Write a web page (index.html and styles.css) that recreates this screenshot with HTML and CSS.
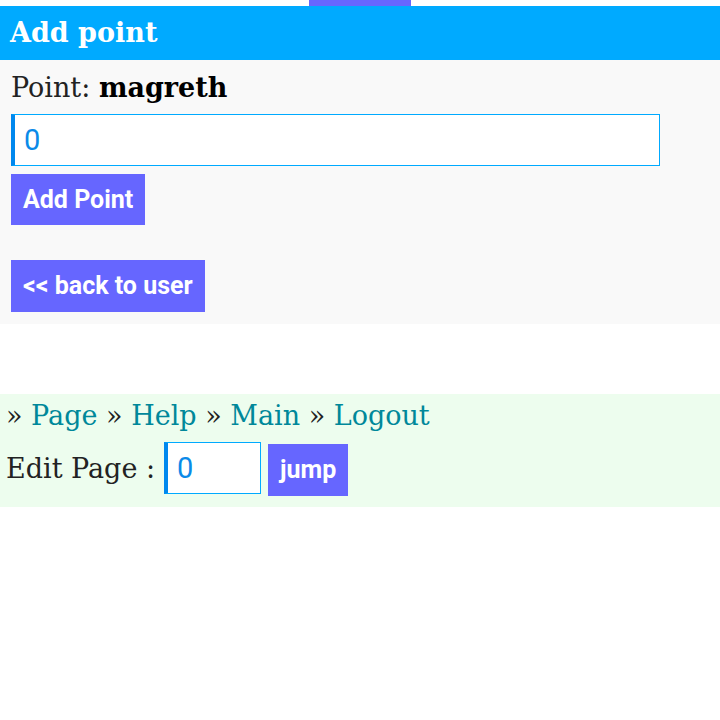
FILE: index.html
```html
<!DOCTYPE html>
<html lang="en">
<head>
  <meta charset="UTF-8" />
  <meta name="viewport" content="width=device-width, initial-scale=1.0"/>
  <title>Add point</title>
  <link rel="stylesheet" href="styles.css">
</head>
<body>
  <div class="topbar"><div class="tab"></div></div>
  <h2 class="title">Add point</h2>
  <div class="panel">
    <p class="who">Point: <b>magreth</b></p>
    <form class="point-form">
      <input type="text" class="field wide" value="0" />
      <button type="submit" class="btn">Add Point</button>
    </form>
    <a class="btn back" href="#">&lt;&lt; back to user</a>
  </div>

  <div class="footer">
    <div class="crumbs">
      &raquo; <a href="#">Page</a> &raquo; <a href="#">Help</a> &raquo; <a href="#">Main</a> &raquo; <a href="#">Logout</a>
    </div>
    <form class="jump-form">
      <label>Edit Page :</label>
      <input type="text" class="field short" value="0" />
      <button type="submit" class="btn small">jump</button>
    </form>
  </div>
</body>
</html>
```

FILE: styles.css
```css
body {
  margin: 0;
  font-family: "DejaVu Serif", "Liberation Serif", serif;
  font-size: 27px;
  color: #222;
  background: #fff;
}
.topbar {
  display: flex;
  justify-content: center;
  height: 6px;
}
.tab {
  width: 102px;
  background: #6666ff;
}
.title {
  margin: 0;
  height: 54px;
  padding: 0 10px;
  line-height: 54px;
  font-size: 27px;
  font-weight: bold;
  color: #fff;
  background: #00aaff;
}
.panel {
  background: #f9f9f9;
  padding: 10px 11px 12px;
}
.who {
  margin: 0 0 8px;
  line-height: 36px;
}
.who b {
  color: #000;
}
.point-form {
  display: flex;
  flex-direction: column;
  align-items: flex-start;
  gap: 8px;
  margin-bottom: 35px;
}
.field {
  box-sizing: border-box;
  height: 52px;
  padding: 0 9px;
  border: 1px solid #00aaff;
  border-left: 4px solid #0088ee;
  background: #fff;
  color: #0a8ae8;
  font-family: Roboto, sans-serif;
  font-size: 29px;
  outline: none;
}
.wide {
  width: 649px;
}
.short {
  width: 97px;
}
.btn {
  display: inline-block;
  box-sizing: border-box;
  height: 51px;
  padding: 0 12px;
  border: none;
  background: #6666ff;
  color: #fff;
  font-family: Roboto, sans-serif;
  font-weight: bold;
  font-size: 25px;
  line-height: 51px;
  text-decoration: none;
  cursor: pointer;
}
.back {
  height: 52px;
  line-height: 52px;
}
.footer {
  margin-top: 70px;
  background: #edfdee;
  padding: 4px 6px 11px;
}
.crumbs {
  line-height: 36px;
}
.crumbs a {
  color: #00889a;
  text-decoration: none;
}
.jump-form {
  display: flex;
  align-items: center;
  gap: 7px;
  margin-top: 6px;
}
.jump-form label {
  margin-right: 2px;
}
.jump-form .small {
  height: 52px;
  line-height: 52px;
  padding: 0 12px;
  margin-top: 4px;
}
```
